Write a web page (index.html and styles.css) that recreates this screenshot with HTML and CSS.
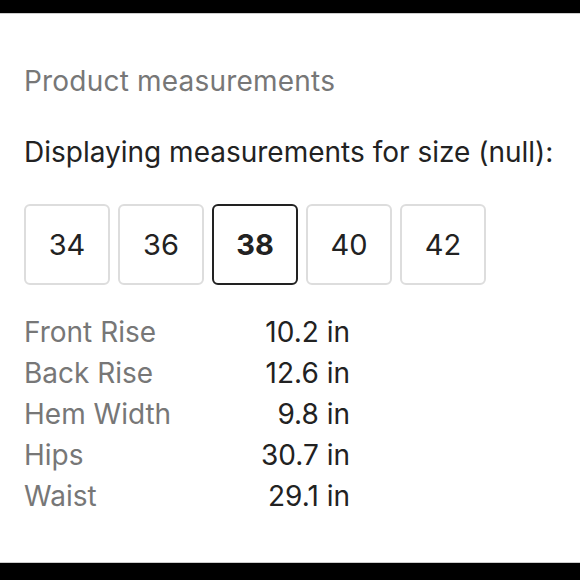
FILE: index.html
```html
<!DOCTYPE html>
<html>
<head>
<meta charset="utf-8">
<link rel="stylesheet" href="styles.css">
</head>
<body>
<div class="page">
  <div class="bar"></div>
  <div class="content">
    <h2 class="title">Product measurements</h2>
    <p class="subtitle">Displaying measurements for size (null):</p>
    <div class="sizes">
      <div class="size">34</div>
      <div class="size">36</div>
      <div class="size selected">38</div>
      <div class="size">40</div>
      <div class="size">42</div>
    </div>
    <div class="table">
      <div class="label">Front Rise</div><div class="value">10.2 in</div>
      <div class="label">Back Rise</div><div class="value">12.6 in</div>
      <div class="label">Hem Width</div><div class="value">9.8 in</div>
      <div class="label">Hips</div><div class="value">30.7 in</div>
      <div class="label">Waist</div><div class="value">29.1 in</div>
    </div>
  </div>
  <div class="bar bottom"></div>
</div>
</body>
</html>
```
FILE: styles.css
```css
html, body {
  margin: 0;
  padding: 0;
  background: #fff;
}
.page {
  width: 100%;
  height: 580px;
  display: flex;
  flex-direction: column;
  font-family: Inter, "Liberation Sans", sans-serif;
}
.bar {
  height: 13px;
  background: #000;
  border-bottom: 1px solid #ccc;
  flex: none;
}
.bar.bottom {
  margin-top: auto;
  height: 17px;
  border-bottom: none;
  border-top: 1px solid #ccc;
}
.content {
  padding: 0 0 0 24px;
}
.title {
  margin: 50px 0 0;
  font-size: 28px;
  font-weight: 400;
  line-height: 34px;
  letter-spacing: 0.2px;
  color: #777;
}
.subtitle {
  margin: 37px 0 0;
  font-size: 28px;
  line-height: 34px;
  color: #222;
}
.sizes {
  display: flex;
  gap: 8px;
  margin-top: 35px;
}
.size {
  box-sizing: border-box;
  width: 86px;
  height: 81px;
  border: 2px solid #ddd;
  border-radius: 6px;
  display: flex;
  align-items: center;
  justify-content: center;
  font-size: 29px;
  color: #222;
}
.size.selected {
  border-color: #222;
  font-weight: 700;
}
.table {
  display: grid;
  grid-template-columns: 200px 126px;
  margin-top: 27px;
  font-size: 28px;
  line-height: 41px;
}
.label {
  color: #777;
}
.value {
  color: #222;
  text-align: right;
}
```
